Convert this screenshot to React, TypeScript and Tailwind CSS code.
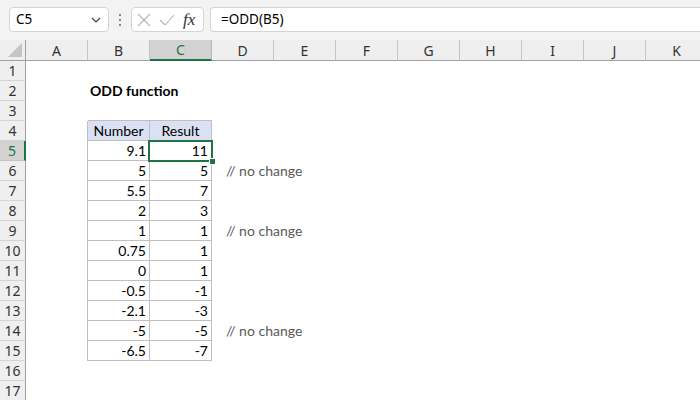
import React from 'react';

const COLS = ['A', 'B', 'C', 'D', 'E', 'F', 'G', 'H', 'I', 'J', 'K'];
const DATA: [string, string][] = [
  ['9.1', '11'],
  ['5', '5'],
  ['5.5', '7'],
  ['2', '3'],
  ['1', '1'],
  ['0.75', '1'],
  ['0', '1'],
  ['-0.5', '-1'],
  ['-2.1', '-3'],
  ['-5', '-5'],
  ['-6.5', '-7'],
];
const COMMENT_ROWS = [6, 9, 14];

function Cell({ r, c }: { r: number; c: number }) {
  const inTable = r >= 4 && r <= 15 && (c === 1 || c === 2);
  const leftOfTable = r >= 4 && r <= 15 && c === 0;
  const aboveTable = r === 3 && (c === 1 || c === 2);
  const isHeader = r === 4 && inTable;
  let content: React.ReactNode = null;
  let align = 'justify-end pr-[3px]';
  if (r === 2 && c === 1) {
    content = <span className="font-bold">ODD function</span>;
    align = 'justify-start pl-[2px]';
  } else if (isHeader) {
    content = c === 1 ? 'Number' : 'Result';
    align = 'justify-center';
  } else if (inTable) {
    content = DATA[r - 5][c - 1];
  } else if (c === 3 && COMMENT_ROWS.includes(r)) {
    content = <span className="text-[#595959]">// no change</span>;
    align = 'justify-start pl-[14px]';
  }
  const cls = [
    'relative h-[20px] flex items-center whitespace-nowrap overflow-visible text-[14px] text-black',
    align,
    inTable ? 'border-r border-b border-[#bfbfbf]' : '',
    leftOfTable ? 'border-r border-[#bfbfbf]' : '',
    aboveTable ? 'border-b border-[#bfbfbf]' : '',
    isHeader ? 'bg-[#d9e1f2]' : '',
  ].join(' ');
  const selected = r === 5 && c === 2;
  return (
    <div className={cls}>
      <span className="relative leading-none">{content}</span>
      {selected && (
        <>
          <div className="absolute left-[-2px] top-[-1px] right-[-2px] bottom-[-2px] border-2 border-[#217346] z-10" />
          <div className="absolute right-[-5px] bottom-[-5px] w-[7px] h-[7px] bg-[#217346] border border-white z-20" />
        </>
      )}
    </div>
  );
}

export default function App() {
  const rows = Array.from({ length: 17 }, (_, i) => i + 1);
  return (
    <div
      className="w-[700px] h-[400px] overflow-hidden bg-white relative"
      style={{ fontFamily: 'Lato, "Noto Sans", sans-serif' }}
    >
      {/* Formula bar */}
      <div
        className="h-[40px] bg-[#f3f3f3] flex items-start pt-[7px] pl-[9px]"
        style={{ fontFamily: '"Noto Sans", "Open Sans", sans-serif' }}
      >
        <div className="w-[100px] h-[25px] bg-white border border-[#d4d4d4] rounded-[4px] flex items-center justify-between pl-[6px] pr-[7px] text-[13.5px] text-black">
          <span>C5</span>
          <svg width="10" height="6" viewBox="0 0 10 6">
            <path d="M1 1 L5 5 L9 1" fill="none" stroke="#444" strokeWidth="1.2" />
          </svg>
        </div>
        <div className="w-[22px] h-[25px] flex flex-col items-center justify-center gap-[3px]">
          <div className="w-[2px] h-[2px] bg-[#8a8a8a]" />
          <div className="w-[2px] h-[2px] bg-[#8a8a8a]" />
          <div className="w-[2px] h-[2px] bg-[#8a8a8a]" />
        </div>
        <div className="w-[73px] h-[25px] bg-white border border-[#d4d4d4] rounded-[4px] flex items-center pl-[5px] gap-[8px]">
          <svg width="14" height="14" viewBox="0 0 14 14">
            <path d="M1 1 L13 13 M13 1 L1 13" stroke="#b4b4b4" strokeWidth="1.1" fill="none" />
          </svg>
          <svg width="16" height="12" viewBox="0 0 16 12">
            <path d="M1 6 L6 11 L15 1" stroke="#b4b4b4" strokeWidth="1.1" fill="none" />
          </svg>
          <span
            className="italic text-[17px] text-[#333] leading-none"
            style={{ fontFamily: '"Liberation Serif", serif' }}
          >
            fx
          </span>
        </div>
        <div className="ml-[6px] flex-1 h-[25px] bg-white border border-[#d4d4d4] border-r-0 rounded-l-[4px] flex items-center pl-[10px] text-[13.5px] text-black">
          =ODD(B5)
        </div>
      </div>

      {/* Sheet */}
      <div className="grid grid-cols-[26px_repeat(11,62px)]">
        {/* Header row */}
        <div className="h-[21px] bg-[#efefef] border-r border-b border-[#a0a0a0] relative">
          <svg className="absolute right-[3px] bottom-[3px]" width="14" height="14" viewBox="0 0 14 14">
            <path d="M14 0 L14 14 L0 14 Z" fill="#c4c4c4" />
          </svg>
        </div>
        {COLS.map((col) =>
          col === 'C' ? (
            <div
              key={col}
              className="h-[21px] bg-[#d2d2d2] border-r border-[#b8b8b8] border-b-2 border-b-[#217346] flex items-center justify-center text-[14px] text-[#217346]"
              style={{ fontFamily: '"Noto Sans", sans-serif' }}
            >
              {col}
            </div>
          ) : (
            <div
              key={col}
              className="h-[21px] bg-[#efefef] border-r border-[#c4c4c4] border-b border-b-[#a0a0a0] flex items-center justify-center text-[14px] text-[#333]"
              style={{ fontFamily: '"Noto Sans", sans-serif' }}
            >
              {col}
            </div>
          )
        )}
        {rows.map((r) => (
          <React.Fragment key={r}>
            {r === 5 ? (
              <div
                className="h-[20px] bg-[#d2d2d2] border-r-2 border-r-[#217346] border-b border-b-[#c4c4c4] flex items-center justify-center text-[14px] text-[#217346]"
                style={{ fontFamily: '"Noto Sans", sans-serif' }}
              >
                {r}
              </div>
            ) : (
              <div
                className="h-[20px] bg-[#efefef] border-r border-r-[#a0a0a0] border-b border-b-[#d4d4d4] flex items-center justify-center text-[14px] text-[#333]"
                style={{ fontFamily: '"Noto Sans", sans-serif' }}
              >
                {r}
              </div>
            )}
            {COLS.map((_, c) => (
              <Cell key={c} r={r} c={c} />
            ))}
          </React.Fragment>
        ))}
      </div>
    </div>
  );
}
